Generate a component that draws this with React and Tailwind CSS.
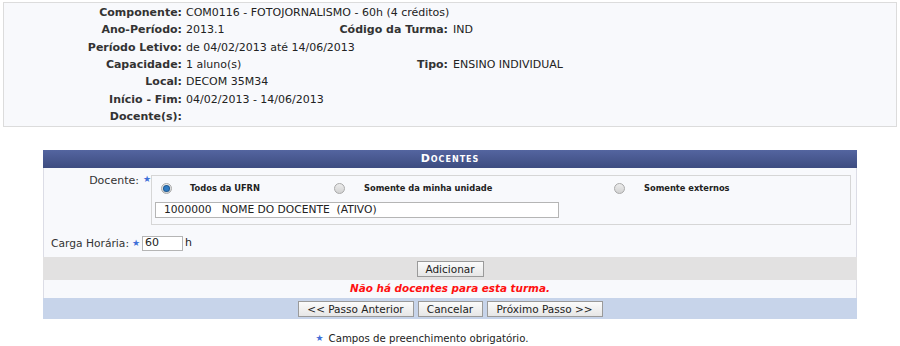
const FONT = { fontFamily: '"DejaVu Sans", Verdana, sans-serif' }

const INFO = [
  { label: "Componente:", value: "COM0116 - FOTOJORNALISMO - 60h (4 créditos)", wide: true },
  { label: "Ano-Período:", value: "2013.1", label2: "Código da Turma:", value2: "IND" },
  { label: "Período Letivo:", value: "de 04/02/2013 até 14/06/2013", wide: true },
  { label: "Capacidade:", value: "1 aluno(s)", label2: "Tipo:", value2: "ENSINO INDIVIDUAL" },
  { label: "Local:", value: "DECOM 35M34", wide: true },
  { label: "Início - Fim:", value: "04/02/2013 - 14/06/2013", wide: true },
  { label: "Docente(s):", value: "", wide: true },
]

function Star() {
  return <span className="text-[9px] leading-none text-[#3f6fd8]">★</span>
}

function Radio({ checked }) {
  return (
    <span className="flex h-[11px] w-[11px] shrink-0 items-center justify-center rounded-full border border-[#a9a9a9] bg-gradient-to-b from-[#ececec] to-[#d2d2d2]">
      {checked && <span className="h-[5px] w-[5px] rounded-full bg-[#2f7bc4] ring-1 ring-[#1f5a92]" />}
    </span>
  )
}

function Button({ children, className = "" }) {
  return (
    <button className={"h-[16px] whitespace-nowrap border border-[#9a9a9a] bg-gradient-to-b from-[#fbfbfb] to-[#e6e6e6] px-0 text-[10.5px] leading-[14px] text-[#222] " + className}>
      {children}
    </button>
  )
}

export default function App() {
  return (
    <div style={FONT} className="h-[346px] w-[900px] overflow-hidden bg-white text-[11px] text-[#222]">
      <div className="mx-[3px] pt-[2px]">
        <div className="border border-[#dcdcdc] bg-[#f8f9fc] py-[1px]">
          {INFO.map((row) => (
            <div key={row.label} className="flex h-[17.3px] items-center whitespace-nowrap leading-none">
              <div className="w-[182px] pr-[4px] text-right font-bold text-[#333]">{row.label}</div>
              {row.wide ? (
                <div>{row.value}</div>
              ) : (
                <>
                  <div className="w-[150px]">{row.value}</div>
                  <div className="w-[112px] text-right font-bold text-[#333]">{row.label2}</div>
                  <div className="ml-[5px]">{row.value2}</div>
                </>
              )}
            </div>
          ))}
        </div>
      </div>

      <div className="mx-[43px] mt-[23px] w-[814px]">
        <div className="flex h-[18px] items-center justify-center bg-gradient-to-b from-[#5465a0] to-[#3d4c80] text-[11px] font-bold tracking-[1px] text-white [font-variant:small-caps]">
          Docentes
        </div>
        <div className="border-x border-[#dcdde6] bg-[#f8f9fc]">
          <div className="flex pt-[7px]">
            <div className="flex w-[107px] justify-end gap-[4px]">
              <span className="leading-[12px] text-[#333]">Docente:</span>
              <Star />
            </div>
            <div className="h-[50px] w-[700px] border border-[#d6d6d6]">
              <div className="mt-[6px] flex h-[12px] items-center text-[8.3px] font-bold">
                <div className="ml-[9px] flex w-[173px] items-center">
                  <Radio checked />
                  <span className="ml-[18px]">Todos da UFRN</span>
                </div>
                <div className="flex w-[280px] items-center">
                  <Radio />
                  <span className="ml-[19px]">Somente da minha unidade</span>
                </div>
                <div className="flex items-center">
                  <Radio />
                  <span className="ml-[19px]">Somente externos</span>
                </div>
              </div>
              <div className="ml-[3px] mt-[8px] flex h-[16px] w-[404px] items-center whitespace-pre border border-[#b5b5b5] bg-white pl-[8px] text-[10.7px]">
                1000000   NOME DO DOCENTE  (ATIVO)
              </div>
            </div>
          </div>
          <div className="flex h-[32px] items-center pl-[7px] pt-[5px]">
            <span className="text-[10.7px] text-[#333]">Carga Horária:</span>
            <span className="ml-[3px]"><Star /></span>
            <span className="ml-[2px] flex h-[15px] w-[41px] items-center border border-[#b5b5b5] bg-white pl-[2px]">60</span>
            <span className="ml-[2px]">h</span>
          </div>
        </div>
        <div className="flex h-[23px] items-center justify-center bg-[#e2e1e1]">
          <Button className="w-[67px]">Adicionar</Button>
        </div>
        <div className="flex h-[18px] items-center justify-center border-x border-[#dcdde6] bg-[#f8f9fc] text-[10.4px] font-bold italic text-[#ff1010]">
          Não há docentes para esta turma.
        </div>
        <div className="flex h-[21px] items-center justify-center gap-[4px] bg-[#c7d4ea]">
          <Button className="w-[116px]">&lt;&lt; Passo Anterior</Button>
          <Button className="w-[65px]">Cancelar</Button>
          <Button className="w-[116px]">Próximo Passo &gt;&gt;</Button>
        </div>
      </div>

      <div className="mt-[12px] flex items-center justify-center gap-[5px] pr-[56px] text-[10.2px] text-[#222]">
        <Star />
        <span>Campos de preenchimento obrigatório.</span>
      </div>
    </div>
  )
}
